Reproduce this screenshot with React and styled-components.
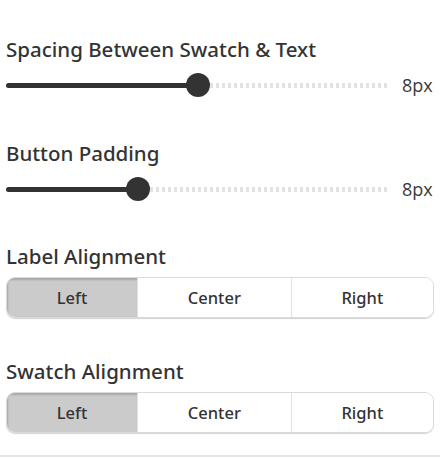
import React from "react";
import styled, { createGlobalStyle } from "styled-components";

const GlobalStyle = createGlobalStyle`
  body {
    margin: 0;
    background: #fff;
    font-family: "Noto Sans", "Open Sans", sans-serif;
    color: #333;
  }
`;

const sliders = [
  { label: "Spacing Between Swatch & Text", value: 8, max: 16, gap: 0 },
  { label: "Button Padding", value: 8, max: 24, gap: 43 },
];

const groups = [
  { label: "Label Alignment", options: ["Left", "Center", "Right"], active: 0, gap: 42 },
  { label: "Swatch Alignment", options: ["Left", "Center", "Right"], active: 0, gap: 40 },
];

const App = () => {
  return (
    <>
      <GlobalStyle />
      <Panel>
        {sliders.map((s) => (
          <Section key={s.label} $gap={s.gap}>
            <Heading>{s.label}</Heading>
            <SliderRow>
              <Track>
                <Filled style={{ width: `calc(12px + (100% - 24px) * ${s.value / s.max})` }} />
                <Thumb style={{ left: `calc(12px + (100% - 24px) * ${s.value / s.max})` }} />
              </Track>
              <Value>{s.value}px</Value>
            </SliderRow>
          </Section>
        ))}
        {groups.map((g) => (
          <Section key={g.label} $gap={g.gap} $tight>
            <Heading>{g.label}</Heading>
            <Segmented>
              {g.options.map((o, i) => (
                <Segment key={o} $active={i === g.active}>
                  {o}
                </Segment>
              ))}
            </Segmented>
          </Section>
        ))}
        <Divider />
      </Panel>
    </>
  );
};

const Panel = styled.div`
  width: 446px;
  padding-top: 36px;
  display: flex;
  flex-direction: column;
`;

const Section = styled.div`
  margin-top: ${(p) => p.$gap}px;
  padding: 0 12px 0 6px;
  display: flex;
  flex-direction: column;
  gap: ${(p) => (p.$tight ? "8px" : "11px")};
`;

const Heading = styled.div`
  font-size: 20.5px;
  font-weight: 500;
  line-height: 26px;
  color: #333;
`;

const SliderRow = styled.div`
  display: flex;
  align-items: center;
  gap: 13px;
  height: 24px;
`;

const Track = styled.div`
  position: relative;
  flex: 1;
  height: 5px;
  border-radius: 3px;
  background: repeating-linear-gradient(
    90deg,
    #e2e2e2 0 3px,
    transparent 3px 6px
  );
`;

const Filled = styled.div`
  height: 100%;
  border-radius: 3px;
  background: #333;
`;

const Thumb = styled.div`
  position: absolute;
  top: 50%;
  width: 24px;
  height: 24px;
  border-radius: 50%;
  background: #333;
  transform: translate(-50%, -50%);
`;

const Value = styled.div`
  font-family: "Open Sans", sans-serif;
  font-size: 18px;
  font-weight: 400;
  color: #3a3a3a;
  width: 32px;
`;

const Segmented = styled.div`
  display: flex;
  height: 41px;
  box-sizing: border-box;
  border: 1px solid #dadada;
  border-radius: 9px;
  box-shadow: 0 1px 1px rgba(0, 0, 0, 0.18);
  overflow: hidden;
`;

const Segment = styled.div`
  flex: 1 1 auto;
  display: flex;
  align-items: center;
  justify-content: center;
  font-size: 16.5px;
  font-weight: 500;
  color: #333;
  background: ${(p) => (p.$active ? "#cbcbcb" : "#fff")};
  box-shadow: ${(p) => (p.$active ? "inset 1px 2px 2px rgba(0,0,0,0.18)" : "none")};
  & + & {
    border-left: 1px solid #e2e2e2;
  }
`;

const Divider = styled.div`
  margin-top: 22px;
  height: 2px;
  background: #e6e6e6;
  width: 440px;
`;

export default App;
